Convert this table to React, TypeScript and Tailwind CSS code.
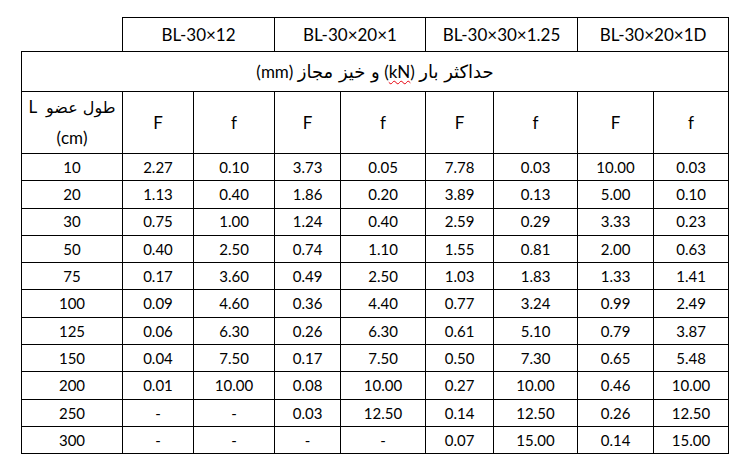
import type {ReactElement} from "react";
import React from "react";

const cols = [101, 71, 81, 66, 85, 68, 84, 76, 75];

const sections = ["BL-30×12", "BL-30×20×1", "BL-30×30×1.25", "BL-30×20×1D"];

const rows: string[][] = [
    ["10", "2.27", "0.10", "3.73", "0.05", "7.78", "0.03", "10.00", "0.03"],
    ["20", "1.13", "0.40", "1.86", "0.20", "3.89", "0.13", "5.00", "0.10"],
    ["30", "0.75", "1.00", "1.24", "0.40", "2.59", "0.29", "3.33", "0.23"],
    ["50", "0.40", "2.50", "0.74", "1.10", "1.55", "0.81", "2.00", "0.63"],
    ["75", "0.17", "3.60", "0.49", "2.50", "1.03", "1.83", "1.33", "1.41"],
    ["100", "0.09", "4.60", "0.36", "4.40", "0.77", "3.24", "0.99", "2.49"],
    ["125", "0.06", "6.30", "0.26", "6.30", "0.61", "5.10", "0.79", "3.87"],
    ["150", "0.04", "7.50", "0.17", "7.50", "0.50", "7.30", "0.65", "5.48"],
    ["200", "0.01", "10.00", "0.08", "10.00", "0.27", "10.00", "0.46", "10.00"],
    ["250", "-", "-", "0.03", "12.50", "0.14", "12.50", "0.26", "12.50"],
    ["300", "-", "-", "-", "-", "0.07", "15.00", "0.14", "15.00"],
];

const cell = "border border-black p-0 text-center align-middle";
const fa = "font-['DejaVu_Sans',sans-serif]";

const App = (): ReactElement => {
    return (
        <div className="w-[749px] h-[468px] bg-white pt-[17px] pl-[21px] text-black text-[15px] font-['Lato','DejaVu_Sans',sans-serif]">
            <table className="table-fixed border-collapse w-[708px]">
                <colgroup>
                    {cols.map((w, i) => (
                        <col key={i} style={{width: w}} />
                    ))}
                </colgroup>
                <tbody>
                    {/* section titles */}
                    <tr className="h-[34px] text-[17px]">
                        <td className="p-0" />
                        {sections.map(s => (
                            <td key={s} colSpan={2} className={cell}>{s}</td>
                        ))}
                    </tr>
                    <tr className="h-[40px]">
                        <td colSpan={9} className={cell}>
                            <span dir="rtl" className="text-[17px]">
                                <span className={`${fa} text-[18px]`}>حداکثر بار</span> (<span className="underline decoration-wavy decoration-red-600 decoration-1 underline-offset-2">kN</span>) <span className={`${fa} text-[18px]`}>و خیز مجاز</span> (mm)
                            </span>
                        </td>
                    </tr>
                    <tr className="h-[60px] text-[17px]">
                        <td className={cell}>
                            <div dir="rtl" className="leading-[30px]">
                                <span className={`${fa} text-[16px]`}>طول عضو</span>&nbsp; L
                                <br />
                                (cm)
                            </div>
                        </td>
                        {["F", "f", "F", "f", "F", "f", "F", "f"].map((h, i) => (
                            <td key={i} className={cell}>{h}</td>
                        ))}
                    </tr>
                    {rows.map(r => (
                        <tr key={r[0]} className="h-[27.3px]">
                            {r.map((v, i) => (
                                <td key={i} className={cell}>{v}</td>
                            ))}
                        </tr>
                    ))}
                </tbody>
            </table>
        </div>
    );
};

export default App;
